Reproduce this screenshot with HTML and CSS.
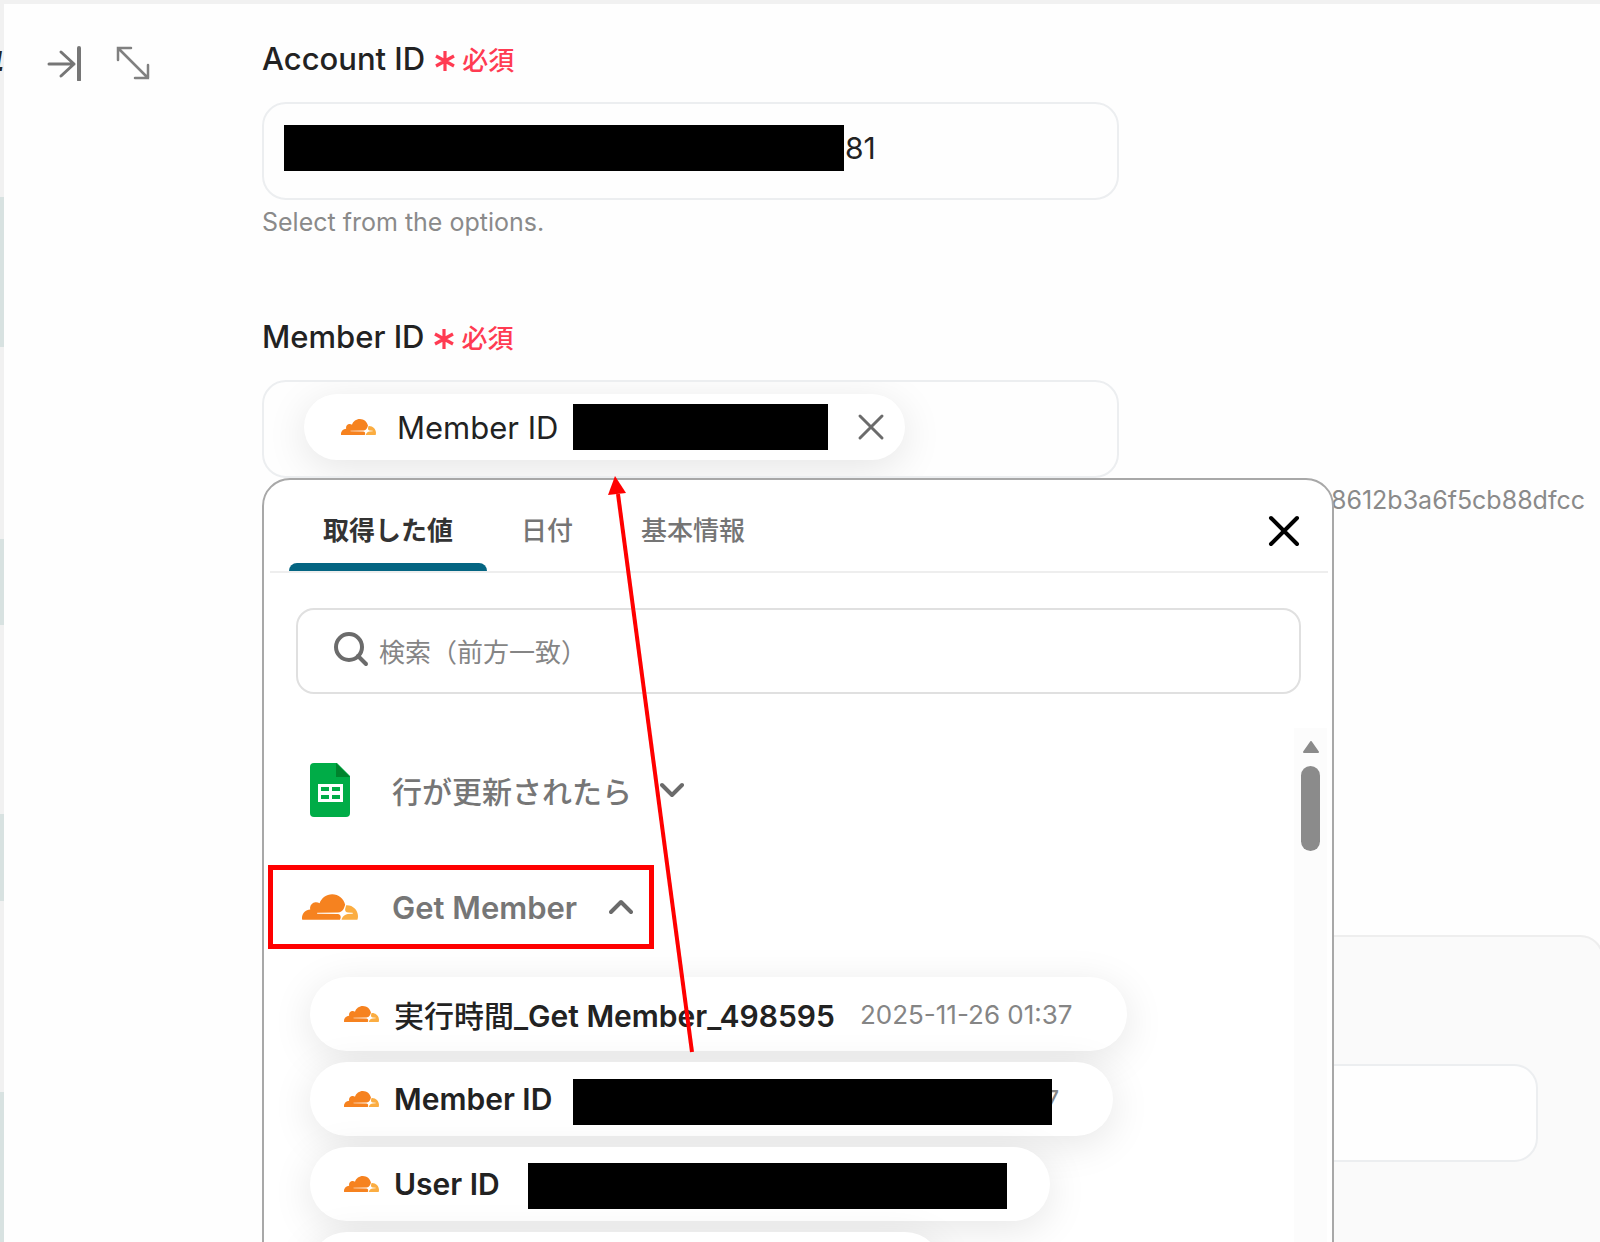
FILE: index.html
```html
<!DOCTYPE html>
<html lang="ja">
<head>
<meta charset="utf-8">
<meta name="viewport" content="width=device-width, initial-scale=1">
<title>Get Member</title>
<link rel="stylesheet" href="styles.css">
</head>
<body>
<svg class="defs" aria-hidden="true">
  <symbol id="cloud" viewBox="0 6 24 12">
    <path fill="#f6821f" d="M16.5088 16.8447c.1475-.5068.0908-.9707-.1553-1.3154-.2246-.3164-.6045-.499-1.0615-.5205l-8.6592-.1123a.1559.1559 0 0 1-.1333-.0713c-.0283-.042-.0351-.0986-.021-.1553.0278-.084.1123-.1484.2036-.1562l8.7359-.1123c1.0351-.0489 2.1601-.8868 2.5537-1.9136l.499-1.3013c.0215-.0561.0293-.1128.0147-.168-.5625-2.5463-2.835-4.4453-5.5499-4.4453-2.5039 0-4.6284 1.6177-5.3876 3.8614-.4927-.3658-1.1187-.5625-1.794-.499-1.2026.119-2.1665 1.083-2.2861 2.2856-.0283.31-.0069.6128.0635.894C1.5683 13.171 0 14.7754 0 16.752c0 .1748.0142.3515.0352.5273.0141.083.0844.1475.1689.1475h15.9814c.0909 0 .1758-.0645.2032-.1553l.12-.4268z"/>
    <path fill="#fbad41" d="M19.2656 11.2813c-.0771 0-.1611 0-.2383.0112-.0566 0-.1054.0415-.127.0976l-.3378 1.1744c-.1475.5068-.0918.9707.1543 1.3164.2256.3164.6055.498 1.0625.5195l1.8437.1133c.0557 0 .1055.0263.1329.0703.0283.043.0351.1074.0214.1562-.0283.084-.1132.1485-.204.1553l-1.921.1123c-1.041.0488-2.1582.8867-2.5527 1.914l-.1406.3585c-.0283.0713.0215.1416.0986.1416h6.5977c.0771 0 .1474-.0489.169-.126.1122-.4082.1757-.837.1757-1.2803 0-2.6025-2.125-4.727-4.7344-4.727"/>
  </symbol>
  <symbol id="asterisk" viewBox="0 0 20 20">
    <path d="M10 0v20M1 5l18 10M19 5L1 15" fill="none" stroke="currentColor" stroke-width="3.200"/>
  </symbol>
</svg>
<div class="app">
  <aside class="canvas">
    <span class="step">4</span>
    <i class="node node-a"></i>
    <i class="node node-b"></i>
    <i class="node node-c"></i>
    <i class="node node-d"></i>
  </aside>
  <main class="panel">
    <div class="tools">
      <button type="button" aria-label="閉じる">
        <svg width="36" height="36" viewBox="0 0 36 36" fill="none" stroke="#767676" stroke-width="3" stroke-linecap="round" stroke-linejoin="round"><path d="M2 19h25M14 7l13 12-13 12"/><path d="M32 3v32" stroke-width="4"/></svg>
      </button>
      <button type="button" aria-label="拡大">
        <svg width="36" height="36" viewBox="0 0 36 36" fill="none" stroke="#808080" stroke-width="2.500" stroke-linecap="round"><path d="M3 3l30 30M3 15V3h13M33 20v13H20"/></svg>
      </button>
    </div>
    <form class="form">
      <div class="field">
        <label class="label" for="account">Account ID <span class="required"><svg width="20" height="20"><use href="#asterisk"/></svg>必須</span></label>
        <div class="box">
          <span class="redacted redacted-account"></span>
          <input id="account" type="text" value="81">
        </div>
        <p class="help">Select from the options.</p>
      </div>
      <div class="field">
        <label class="label" for="member">Member ID <span class="required"><svg width="20" height="20"><use href="#asterisk"/></svg>必須</span></label>
        <div class="anchor">
          <div class="box box-chip">
            <div class="token">
              <svg class="cloud-sm"><use href="#cloud"/></svg>
              <span>Member ID</span>
              <span class="redacted redacted-token"></span>
              <button id="member" type="button" aria-label="Member IDを削除"><svg width="28" height="28" viewBox="0 0 28 28" fill="none" stroke="#6b6b6b" stroke-width="3" stroke-linecap="round"><path d="M3 3l22 22M25 3L3 25"/></svg></button>
            </div>
          </div>

          <section class="popup">
            <header class="tabs">
              <button type="button" class="tab active">取得した値</button>
              <button type="button" class="tab">日付</button>
              <button type="button" class="tab">基本情報</button>
              <button type="button" class="close" aria-label="閉じる"><svg width="34" height="34" viewBox="0 0 34 34" fill="none" stroke="#000" stroke-width="4" stroke-linecap="round"><path d="M4 4l26 26M30 4L4 30"/></svg></button>
            </header>
            <div class="search">
              <svg width="36" height="36" viewBox="0 0 36 36" fill="none" stroke="#6b6b6b" stroke-width="4"><circle cx="15" cy="15" r="13"/><path d="M24 24l8 8" stroke-linecap="round"/></svg>
              <input type="search" aria-label="検索" placeholder="検索（前方一致）">
            </div>
            <div class="results">
              <div class="groups">
                <button type="button" class="group">
                  <span class="group-icon"><svg width="40" height="54" viewBox="0 0 40 54"><path fill="#00ac47" d="M4 0h23l13 13v37a4 4 0 0 1-4 4H4a4 4 0 0 1-4-4V4a4 4 0 0 1 4-4z"/><path fill="#00832d" d="M26 0l14 14H26z"/><path fill="#fff" fill-rule="evenodd" d="M8 21h25v18H8zM11 24v4h8v-4zM22 24v4h8v-4zM11 32v4h8v-4zM22 32v4h8v-4z"/></svg></span>
                  行が更新されたら
                  <svg class="chevron" viewBox="0 0 24 16"><path d="M2 3l10 10L22 3"/></svg>
                </button>
                <button type="button" class="group marked">
                  <span class="group-icon"><svg class="cloud-lg"><use href="#cloud"/></svg></span>
                  Get Member
                  <svg class="chevron" viewBox="0 0 24 16"><path d="M2 13L12 3l10 10"/></svg>
                </button>
                <ul class="values">
                  <li><button type="button" class="value">
                    <svg class="cloud-sm"><use href="#cloud"/></svg><b><span class="kanji">実行時間</span>_Get Member_498595</b><span class="sample">2025-11-26 01:37</span>
                  </button></li>
                  <li><button type="button" class="value">
                    <svg class="cloud-sm"><use href="#cloud"/></svg><b>Member ID</b><span class="sample covered">7<span class="redacted redacted-member"></span></span>
                  </button></li>
                  <li><button type="button" class="value value-user">
                    <svg class="cloud-sm"><use href="#cloud"/></svg><b>User ID</b><span class="redacted redacted-user"></span>
                  </button></li>
                  <li><button type="button" class="value value-next" aria-label="次の値"></button></li>
                </ul>
              </div>
              <div class="scrollbar">
                <svg width="16" height="12" viewBox="0 0 16 12"><path fill="#8b8b8b" stroke="#8b8b8b" stroke-width="2" stroke-linejoin="round" d="M8 1l7 10H1z"/></svg>
                <i class="thumb"></i>
              </div>
            </div>
            <svg class="pointer" width="92" height="580" viewBox="0 0 92 580" aria-hidden="true"><path d="M81 576L7 18" stroke="#f00" stroke-width="4"/><path fill="#f00" d="M4 0l11 17-18 2z"/></svg>
          </section>
        </div>
        <p class="help help-value">8612b3a6f5cb88dfcc</p>
      </div>
      <fieldset class="subform">
        <input type="text" class="box" aria-label="値">
      </fieldset>
    </form>
  </main>
</div>
</body>
</html>
```
FILE: styles.css
```css
* { box-sizing: border-box; }
body {
  margin: 0;
  font-family: Inter, "Noto Sans CJK JP", sans-serif;
  color: #222;
  background: #f1f1f1;
}
button, input { font: inherit; color: inherit; background: none; border: 0; padding: 0; }
button { display: flex; }
input { min-width: 0; outline: 0; }
svg { display: block; flex: none; }
.defs { position: absolute; width: 0; height: 0; }

.app { display: flex; height: 100vh; overflow: hidden; padding-top: 4px; }
.canvas { position: relative; flex: none; width: 4px; overflow: hidden; }
.step { display: flex; justify-content: flex-end; padding-top: 40px; font-size: 34px; line-height: 40px; font-weight: 700; font-style: italic; }
.node { position: absolute; left: 0; width: 4px; background: #d8e2e1; }
.node-a { top: 193px; height: 150px; }
.node-b { top: 535px; height: 86px; }
.node-c { top: 810px; height: 87px; }
.node-d { top: 1088px; height: 160px; }

.panel { flex: 1; min-width: 0; display: flex; background: #fefefe; }
.tools { flex: none; width: 258px; display: flex; align-items: flex-start; gap: 32px; padding: 41px 0 0 43px; }
.form { flex: 1; min-width: 0; padding-top: 35px; }
.field { margin-bottom: 79px; }
.label { display: flex; align-items: center; gap: 10px; height: 40px; font-size: 31px; line-height: 40px; font-weight: 500; }
.required { display: flex; align-items: center; gap: 7px; padding-top: 4px; color: #ff3b52; font-size: 26px; }
.box {
  display: flex; align-items: center;
  width: 100%; max-width: 857px; height: 98px;
  margin-top: 23px; padding: 0 20px;
  border: 2px solid #eceef0; border-radius: 24px;
  background: #fefefe; font-size: 30px; overflow: hidden;
}
.box input { flex: 1; padding: 0 0 6px 1px; }
.redacted { flex: none; height: 46px; background: #000; }
.redacted-account { width: 560px; margin-bottom: 6px; }
.help { margin: 6px 0 0; height: 32px; font-size: 25px; line-height: 32px; color: #8a8a8a; }
.help-value { display: flex; justify-content: flex-end; padding-right: 15px; }

.anchor { position: relative; }
.box-chip { padding: 0 40px; }
.token {
  display: flex; align-items: center; height: 66px;
  margin-bottom: 4px; padding: 0 20px 0 37px; border-radius: 33px;
  background: #fff; box-shadow: 0 8px 40px rgba(0, 0, 0, .1); font-size: 31px;
}
.token .cloud-sm { margin-right: 21px; }
.redacted-token { width: 255px; margin: 0 29px 0 15px; }
.cloud-sm { width: 35px; height: 18px; }
.cloud-lg { width: 56px; height: 28px; }

.popup {
  position: absolute; top: 98px; left: 0; width: 1072px; height: 880px;
  display: flex; flex-direction: column;
  border: 2px solid #a8a8a8; border-radius: 28px; background: #fff;
}
.tabs { display: flex; height: 93px; margin: 0 4px 0 6px; padding: 0 22px 0 19px; border-bottom: 2px solid #eee; }
.tab { position: relative; align-items: center; padding: 6px 34px 0; font-size: 26px; font-weight: 500; color: #757575; }
.tab.active { font-weight: 700; color: #333; }
.tab.active::after { content: ""; position: absolute; left: 0; right: 0; bottom: 0; height: 8px; border-radius: 8px 8px 0 0; background: #046582; }
.close { width: 44px; margin-left: auto; padding-top: 10px; align-items: center; justify-content: center; }
.search { display: flex; align-items: center; gap: 9px; flex: none; height: 86px; margin: 35px 31px 0 32px; padding: 0 36px 2px; border: 2px solid #e0e0e0; border-radius: 18px; font-size: 26px; }
.search input { flex: 1; padding-top: 4px; }
.search input::placeholder { color: #858585; opacity: 1; }
.results { flex: 1; min-height: 0; display: flex; margin: 34px 5px 0 0; }
.groups { flex: 1; min-width: 0; padding: 20px 0 0 4px; display: flex; flex-direction: column; align-items: flex-start; }
.group { align-items: center; height: 84px; padding: 0 16px 0 27px; border: 5px solid transparent; font-size: 30px; font-weight: 500; color: #767676; white-space: nowrap; }
.group.marked { margin-top: 33px; border-color: #f00; font-size: 31px; font-weight: 600; }
.group-icon { display: flex; justify-content: center; width: 60px; margin-right: 32px; }
.chevron { width: 24px; height: 16px; margin-left: 28px; fill: none; stroke: #6b6b6b; stroke-width: 4; stroke-linecap: round; stroke-linejoin: round; }
.marked .chevron { margin-left: 32px; }
.values { list-style: none; margin: 28px 0 0 42px; padding: 0; display: flex; flex-direction: column; align-items: flex-start; gap: 11px; }
.value { align-items: center; height: 74px; padding: 0 54px 0 34px; border-radius: 37px; background: #fff; box-shadow: 0 8px 40px rgba(0, 0, 0, .1); font-size: 30px; white-space: nowrap; }
.value .cloud-sm { margin-right: 15px; }
.value b { font-weight: 600; }
.kanji { font-weight: 500; }
.sample { margin-left: 25px; font-size: 26px; color: #858585; }
.covered { position: relative; width: 482px; text-align: right; }
.redacted-member { position: absolute; left: -4px; top: -5px; width: 479px; }
.value-user { padding-right: 43px; }
.redacted-user { width: 479px; margin: 4px 0 0 28px; }
.value-next { width: 632px; }
.scrollbar { flex: none; width: 33px; display: flex; flex-direction: column; align-items: center; gap: 13px; padding-top: 13px; background: #fcfcfc; }
.thumb { width: 19px; height: 85px; border-radius: 10px; background: #8b8b8b; }
.pointer { position: absolute; left: 347px; top: -4px; overflow: visible; }

.subform { margin: 419px -4px 0 0; padding: 104px 64px 0; height: 400px; border: 2px solid #eee; border-radius: 24px; background: #fafafa; }
.subform .box { max-width: none; }
```
